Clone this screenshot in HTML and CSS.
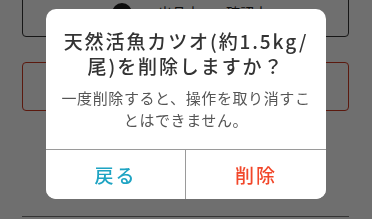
FILE: index.html
```html
<!DOCTYPE html>
<html lang="ja">
<head>
<meta charset="utf-8">
<link rel="stylesheet" href="styles.css">
</head>
<body>
<div class="page">
  <div class="card-top">
    <div class="status-row">
      <span class="dot"></span>
      <span class="status-text">出品中</span>
      <span class="status-text">確認中</span>
    </div>
  </div>
  <div class="card-red"></div>
  <div class="bottom-line"></div>
</div>
<div class="overlay">
  <div class="dialog">
    <div class="dialog-body">
      <p class="title">天然活魚カツオ(約1.5kg/尾)を削除しますか？</p>
      <p class="message">一度削除すると、操作を取り消すことはできません。</p>
    </div>
    <div class="actions">
      <button class="btn btn-back">戻る</button>
      <button class="btn btn-delete">削除</button>
    </div>
  </div>
</div>
</body>
</html>
```
FILE: styles.css
```css
html, body {
  margin: 0;
  padding: 0;
  background: #ffffff;
  font-family: "Noto Sans CJK JP", "Noto Sans", sans-serif;
  width: 372px;
  height: 219px;
  overflow: hidden;
}
.page {
  display: flex;
  flex-direction: column;
  padding: 0 23px 0 22px;
}
.card-top {
  margin-top: -2px;
  height: 39px;
  box-sizing: border-box;
  border: 1px solid #333;
  border-radius: 0 0 4px 4px;
  padding: 4px 0 0 89px;
}
.status-row {
  display: flex;
  align-items: flex-start;
  gap: 12px;
}
.dot {
  width: 20px;
  height: 20px;
  border-radius: 50%;
  background: #222;
  flex: none;
}
.status-text {
  font-size: 14px;
  line-height: 18px;
  color: #222;
  margin-left: 14px;
}
.card-red {
  margin-top: 25px;
  height: 49px;
  box-sizing: border-box;
  border: 1px solid #d03a22;
  border-radius: 4px;
}
.bottom-line {
  margin-top: 105px;
  border-top: 1px solid #777;
}
.overlay {
  position: fixed;
  inset: 0;
  background: rgba(0, 0, 0, 0.565);
  display: flex;
  justify-content: center;
  align-items: flex-start;
  padding-top: 9px;
}
.dialog {
  width: 280px;
  background: #fff;
  border-radius: 10px;
  overflow: hidden;
  display: flex;
  flex-direction: column;
}
.dialog-body {
  padding: 20px 12px 19px;
  text-align: center;
}
.title {
  margin: 0;
  font-size: 19px;
  line-height: 24.5px;
  font-weight: 500;
  letter-spacing: 0.1em;
  color: #333;
}
.message {
  margin: 9px 0 0;
  font-size: 15px;
  line-height: 21.5px;
  letter-spacing: 0.04em;
  color: #555;
}
.actions {
  display: grid;
  grid-template-columns: 1fr 1fr;
  border-top: 1px solid #9a9a9a;
  height: 50px;
  box-sizing: border-box;
}
.btn {
  border: none;
  background: #fff;
  font-family: inherit;
  font-size: 19px;
  font-weight: 500;
  letter-spacing: 0.1em;
  padding: 0;
}
.btn-back {
  color: #1fa4c3;
  border-right: 1px solid #9a9a9a;
}
.btn-delete {
  color: #f2472a;
}
```
